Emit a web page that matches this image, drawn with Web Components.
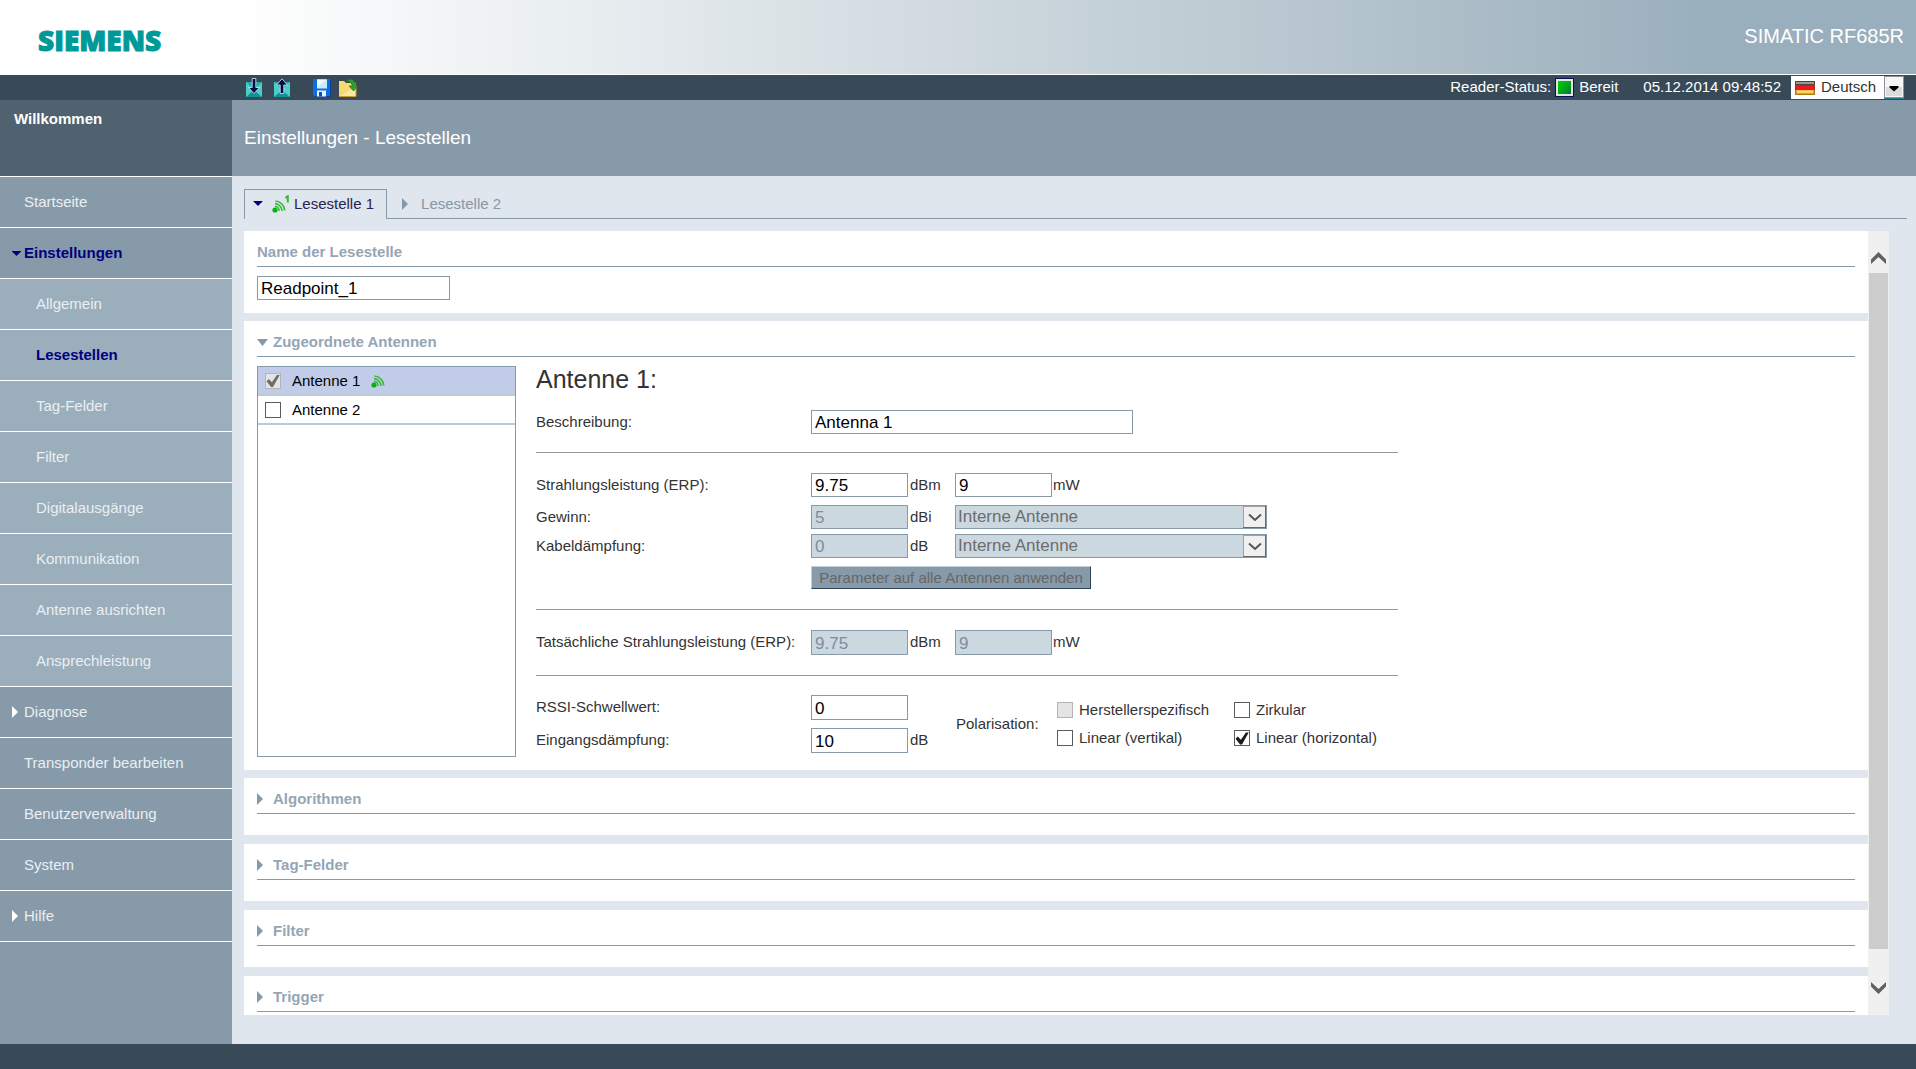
<!DOCTYPE html>
<html lang="de">
<head>
<meta charset="utf-8">
<title>SIMATIC RF685R - Einstellungen - Lesestellen</title>
<style>
  html, body { height: 100%; }
  body { margin: 0; font: 15px/18px "Liberation Sans", Arial, sans-serif; color: #333; }
</style>
</head>
<body>
<reader-app></reader-app>

<script>
const define = (name, html, setup) => {
  const template = document.createElement('template');
  template.innerHTML = '<style>*, *::before { box-sizing: border-box; }</style>' + html;
  customElements.define(name, class extends HTMLElement {
    constructor() {
      super();
      this.attachShadow({ mode: 'open' }).append(template.content.cloneNode(true));
    }
    connectedCallback() {
      if (setup && !this.ready) { this.ready = true; setup(this, this.shadowRoot); }
    }
  });
};

/* Radio wave symbol of an active antenna, with an optional read point number */
define('antenna-icon', `
<style>
  :host { display: block; flex: none; }
  svg { display: block; }
  .num { display: none; }
  :host([number]) .num { display: inline; }
</style>
<svg width="18" height="18" viewBox="0 0 18 18" fill="none" stroke="#36bd36">
  <path d="M3 11.300A5 5 0 0 1 7.200 16" stroke-width="1.500"/>
  <path d="M3 8.700A7.600 7.600 0 0 1 10 16" stroke-width="1.700"/>
  <path d="M3.500 6A10 10 0 0 1 12.700 15.500" stroke-width="1.700"/>
  <circle cx="3" cy="15" r="2.600" fill="#0cb00c" stroke="none"/>
  <path class="num" d="M13.400 2.800L15.800 1.200V7.500" stroke="#2fc02f" stroke-width="2"/>
</svg>`);

define('app-header', `
<style>
  :host { display: flex; align-items: center; justify-content: space-between; flex: none; height: 75px;
    padding: 0 12px 0 38px; border-bottom: 1px solid #fff;
    background: linear-gradient(90deg, #fff 0, #fff 12%, #edf1f3 27%, #b1c1cb 73%, #9aafbd 89%, #9aafbd 100%); }
  .logo { font: 800 28px/30px "Open Sans", sans-serif; color: #099; margin-top: 6px; -webkit-text-stroke: 1px #099; }
  .product { font-size: 20px; line-height: 24px; color: #fff; padding-bottom: 2px; }
</style>
<div class="logo">SIEMENS</div>
<div class="product">SIMATIC RF685R</div>`);

define('tool-bar', `
<style>
  :host { display: flex; align-items: center; flex: none; height: 25px; padding: 0 12px 0 245px; background: #384a58; color: #fff; line-height: 25px; }
  .tools { display: flex; align-items: center; gap: 8px; flex: 1; }
  button { border: 0; padding: 0; background: none; display: block; }
  svg { display: block; }
  .save { margin-left: 13px; }
  .text { padding-bottom: 2px; line-height: 23px; }
  .led { width: 19px; height: 19px; margin: 0 5px 0 4px; border: 1px solid #0a1050; background: #dde8e4; padding: 2px; }
  .led i { display: block; height: 100%; background: linear-gradient(135deg, #0c0 10%, #00a020 60%, #086850); }
  .date { margin: 0 10px 0 25px; }
  .lang { display: grid; grid-template-columns: 30px 63px 20px; height: 23px; background: #fff; }
  .lang > * { grid-row: 1; }
  select { grid-column: 1 / 4; appearance: none; border: 0; margin: 0; padding: 0 0 2px 30px; background: transparent; font: inherit; line-height: 21px; color: #333; height: 23px; }
  .flag { grid-column: 1; align-self: center; margin-left: 4px; pointer-events: none; }
  .drop { grid-column: 3; pointer-events: none; }
</style>
<div class="tools">
  <button aria-label="Laden in Reader"><svg width="18" height="20" viewBox="0 0 18 20">
    <rect x="1" y="4" width="16" height="15" fill="#28aaa8"/><path d="M1 4l8 8 8-8v15H1z" fill="#49cfc8"/><path d="M1 19l8-7 8 7z" fill="#168e96"/>
    <path d="M7.200.500h3.600V9.500h3.700L9 15.500 3.500 9.500h3.700z" fill="#060a48" stroke="#d4f3f2" stroke-width=".8"/></svg></button>
  <button style="margin-left:2px" aria-label="Laden aus Reader"><svg width="18" height="20" viewBox="0 0 18 20">
    <rect x="1" y="4" width="16" height="15" fill="#28aaa8"/><path d="M1 4l8 8 8-8v15H1z" fill="#49cfc8"/><path d="M1 19l8-7 8 7z" fill="#168e96"/>
    <path d="M7.200 15.500h3.600V7h3.700L9 .8 3.500 7h3.700z" fill="#060a48" stroke="#d4f3f2" stroke-width=".8"/></svg></button>
  <button class="save" aria-label="Speichern"><svg width="20" height="20" viewBox="0 0 20 20">
    <path d="M2 1h16a1 1 0 0 1 1 1v17H3l-2-2V2a1 1 0 0 1 1-1z" fill="#0b6fe0"/><path d="M18 1v18h1V2zM3 19h16v-1H3z" fill="#0a3f9c"/>
    <rect x="5" y="1.500" width="10" height="9" fill="#cdeafa"/><path d="M5 1.500h10L5 9z" fill="#eef9ff"/>
    <rect x="5" y="12.500" width="9" height="6" fill="#e8f2fc"/><rect x="7" y="14" width="3" height="4.500" fill="#0a50b4"/></svg></button>
  <button style="margin-left:-2px" aria-label="Öffnen"><svg width="20" height="20" viewBox="0 0 20 20">
    <path d="M1 3h5l2 2h10v14H1z" fill="#f8d775"/><path d="M1 19L18 8v11z" fill="#fbe6a2"/><path d="M1 18.500h17V7" fill="none" stroke="#c99a35"/>
    <path d="M8 2.500C13-.5 17.500 2 17.500 7.500H20L15.500 13 11 8h3C14 5 12 3 8 2.500z" fill="#2f9e2f" stroke="#187018" stroke-width=".6"/></svg></button>
</div>
<span class="text">Reader-Status:</span><span class="led"><i></i></span><span class="text">Bereit</span>
<span class="text date">05.12.2014 09:48:52</span>
<div class="lang">
  <select aria-label="Sprache"><option>Deutsch</option><option>English</option></select>
  <svg class="flag" width="20" height="14" viewBox="0 0 20 14"><path d="M0 0h20v5H0z" fill="#4a4a3e"/><path d="M1 1h18v2H1z" fill="#9a9a8c"/><path d="M0 4.500h20v5H0z" fill="#f01820"/><path d="M0 9.500h20V14H0z" fill="#d8a224"/><path d="M2 9.500h16v2.500H2z" fill="#fbd94c"/><path d="M.5.500h19v13H.5z" fill="none" stroke="#7a3a18" stroke-opacity=".4"/></svg>
  <svg class="drop" width="20" height="23" viewBox="0 0 20 23"><path d="M0 0h20v23H0z" fill="#8d9499"/><path d="M1 1h18v20H1z" fill="#f6f6f6"/><path d="M2 11h16v9H2z" fill="#dcdcdc"/><path d="M0 22h20v1H0z" fill="#2e7288"/><path d="M5.500 10h9v1.500L10 15.500 5.500 11.500z" fill="#000"/></svg>
</div>`);

/* Sidebar entry; attributes: sub, active, arrow="right|down" */
define('nav-item', `
<style>
  :host { display: block; flex: none; border-bottom: 1px solid #fff; background: #879aa9; }
  :host([sub]) { background: #9baebc; }
  a { display: flex; align-items: center; height: 50px; padding-left: 12px; color: #e9eff3; text-decoration: none; }
  :host([sub]) a { padding-left: 24px; }
  :host([active]) a { color: #000080; font-weight: bold; }
  .mark { width: 12px; flex: none; display: flex; }
  svg { display: none; fill: currentColor; }
  :host([arrow=right]) .right, :host([arrow=down]) .down { display: block; }
  .right { color: #fff; }
</style>
<a href="#"><span class="mark">
  <svg class="right" width="6" height="12"><path d="M0 0l6 6-6 6z"/></svg>
  <svg class="down" width="9" height="5"><path d="M0 0h9v.5L4.500 5 0 .5z"/></svg>
</span><slot></slot></a>`);

define('side-nav', `
<style>
  :host { display: flex; flex-direction: column; flex: none; width: 232px; background: #879aa9; overflow: hidden; }
  .welcome { flex: none; height: 77px; padding: 10px 14px; background: #506270; border-bottom: 1px solid #fff; color: #fff; font-weight: bold; }
  nav { display: flex; flex-direction: column; }
</style>
<div class="welcome">Willkommen</div>
<nav><slot></slot></nav>`);

define('tab-bar', `
<style>
  :host { display: flex; flex: none; margin-right: 9px; height: 30px; line-height: 28px; }
  a { display: flex; align-items: center; text-decoration: none; color: #8797a5; }
  .on { border: 1px solid #879aa9; border-bottom: 0; padding: 0 12px 2px 8px; color: #2a2350; }
  .off { flex: 1; border-bottom: 1px solid #879aa9; padding: 1px 0 0 15px; gap: 13px; }
  antenna-icon { margin: 0 4px 0 9px; }
</style>
<a class="on" href="#"><svg width="10" height="5" fill="#000080"><path d="M0 0h10L5 5z"/></svg><antenna-icon number></antenna-icon>Lesestelle 1</a>
<a class="off" href="#"><svg width="6" height="12" fill="#8699a8"><path d="M0 0l6 6-6 6z"/></svg>Lesestelle 2</a>`);

/* White section with an underlined caption; attributes: caption, state="open|closed" */
define('content-panel', `
<style>
  :host { display: block; flex: none; background: #fff; padding: 0 13px 13px; margin-bottom: 8px; }
  :host([state=closed]) { height: 57px; margin-bottom: 9px; }
  h2 { display: flex; align-items: center; height: 36px; margin: 0; padding-top: 7px; border-bottom: 1px solid #879aa9;
    font-size: 15px; line-height: 28px; color: #94a6b4; }
  svg { display: none; fill: #8699a8; flex: none; }
  :host([state=open]) .down, :host([state=closed]) .right { display: block; }
  .down { margin-right: 5px; } .right { margin-right: 10px; }
  slot { display: block; }
  .body { padding-top: 9px; }
</style>
<h2><svg class="down" width="11" height="7"><path d="M0 0h11L5.500 7z"/></svg><svg class="right" width="6" height="12"><path d="M0 0l6 6-6 6z"/></svg><span></span></h2>
<div class="body"><slot></slot></div>`,
(el, root) => { root.querySelector('span').textContent = el.getAttribute('caption'); });

define('text-field', `
<style>
  :host { display: flex; height: 24px; }
  input { flex: 1; width: 100%; min-width: 0; height: 100%; margin: 0; padding: 2px 0 0 3px; border: 1px solid #879aa9; border-radius: 0; background: #fff; color: #000; font: 17px "Liberation Sans", Arial, sans-serif; outline: 0; }
  input:disabled { background: #ccd8e0; color: #7d8d9b; }
  label { flex: none; line-height: 24px; }
  label:not(:empty) { width: 275px; }
</style>
<label for="f"></label><input id="f" type="text">`,
(el, root) => {
  const input = root.querySelector('input');
  input.value = el.getAttribute('value');
  input.disabled = el.hasAttribute('disabled');
  if (el.hasAttribute('label')) root.querySelector('label').textContent = el.getAttribute('label');
  else input.setAttribute('aria-label', el.getAttribute('name'));
});

define('select-field', `
<style>
  :host { display: grid; grid-template-columns: 1fr 24px; height: 24px; width: 312px; }
  select { grid-area: 1 / 1 / 2 / 3; appearance: none; margin: 0; padding: 0 0 2px 2px; border: 1px solid #879aa9; border-radius: 0; background: #ccd8e0; color: #6d6d6d; opacity: 1; font: 17px "Liberation Sans", Arial, sans-serif; }
  svg { grid-area: 1 / 2; pointer-events: none; }
</style>
<select disabled><option>Interne Antenne</option></select>
<svg width="24" height="24" viewBox="0 0 24 24"><path d="M0 1h23v22H0z" fill="#696969"/><path d="M0 1h22v21H0z" fill="#a0a0a0"/><path d="M1 2h21v20H1z" fill="#f0f0f0"/><path d="M6 9.500l6 5.500 6-5.500" fill="none" stroke="#555" stroke-width="2"/></svg>`,
(el, root) => root.querySelector('select').setAttribute('aria-label', el.getAttribute('name')));

define('check-box', `
<style>
  :host { display: flex; align-items: center; }
  label { display: flex; align-items: center; gap: var(--check-gap, 6px); height: 16px; }
  input { appearance: none; flex: none; width: 16px; height: 16px; margin: 0; border: 1px solid #5c5c5c; background: #fff; }
  input:disabled { border-color: #b4b4b4; background: #e4e4e4; }
  input:checked::before { content: ""; display: block; width: 14px; height: 14px; background: #1c1c1c;
    clip-path: polygon(4% 55%, 20% 40%, 42% 62%, 78% 10%, 98% 10%, 50% 96%, 36% 96%); }
  input:checked:disabled::before { background: #6d6d6d; }
</style>
<label><input type="checkbox"><span><slot></slot></span></label>`,
(el, root) => {
  const input = root.querySelector('input');
  input.checked = el.hasAttribute('checked');
  input.disabled = el.hasAttribute('disabled');
});

define('antenna-list', `
<style>
  :host { display: block; flex: none; width: 259px; border: 1px solid #879aa9; color: #000; }
  div { display: flex; align-items: center; gap: 11px; height: 29px; padding: 0 7px; border-bottom: 2px solid #bccbd8; --check-gap: 11px; }
  .sel { background: #c0cce8; }
  antenna-icon { padding-bottom: 4px; }
</style>
<div class="sel"><check-box checked disabled>Antenne 1</check-box><antenna-icon></antenna-icon></div>
<div><check-box>Antenne 2</check-box></div>`);

define('antenna-form', `
<style>
  :host { display: block; flex: 0 1 862px; min-width: 0; }
  h3 { margin: 0; font-size: 25px; line-height: 27px; padding-bottom: 2px; font-weight: normal; }
  section { display: flex; flex-direction: column; padding: 20px 0; border-bottom: 1px solid #999; }
  section:first-of-type { padding: 15px 0 18px; }
  section:last-of-type { flex-direction: row; border: 0; padding: 19px 0 0; }
  .row { display: grid; grid-template-columns: 372px 47px 1fr; line-height: 24px; }
  .row > span { padding-left: 2px; }
  .pair { display: flex; }
  .pair text-field { width: 97px; }
  .pair span { padding-left: 1px; }
  .description { width: 597px; }
  .gain { margin: 8px 0 5px; }
  .tall text-field { height: 25px; }
  button { align-self: flex-start; margin: 8px 0 0 275px; height: 23px; width: 280px; padding: 0; border: 1px solid; border-color: #c3ced7 #2d4252 #2d4252 #c3ced7; border-radius: 0; background: #879aa9; color: #666; font: 15px "Liberation Sans", Arial, sans-serif; }
  .levels { display: flex; flex-direction: column; gap: 8px; width: 420px; flex: none; }
  .levels .row { grid-template-columns: 372px 48px; }
  fieldset { display: flex; align-items: center; border: 0; margin: 0; padding: 0; }
  .name { width: 101px; }
  .options { display: grid; grid-template-columns: 177px auto; gap: 12px 0; }
</style>
<h3>Antenne 1:</h3>
<section><text-field class="description" label="Beschreibung:" value="Antenna 1"></text-field></section>
<section>
  <div class="row"><text-field label="Strahlungsleistung (ERP):" value="9.75"></text-field><span>dBm</span>
    <div class="pair"><text-field name="Strahlungsleistung in mW" value="9"></text-field><span>mW</span></div></div>
  <div class="row gain"><text-field label="Gewinn:" value="5" disabled></text-field><span>dBi</span><select-field name="Gewinn, Antennentyp"></select-field></div>
  <div class="row"><text-field label="Kabeldämpfung:" value="0" disabled></text-field><span>dB</span><select-field name="Kabel, Antennentyp"></select-field></div>
  <button type="button" disabled>Parameter auf alle Antennen anwenden</button>
</section>
<section>
  <div class="row tall"><text-field label="Tatsächliche Strahlungsleistung (ERP):" value="9.75" disabled></text-field><span>dBm</span>
    <div class="pair"><text-field name="Tatsächliche Strahlungsleistung in mW" value="9" disabled></text-field><span>mW</span></div></div>
</section>
<section>
  <div class="levels">
    <div class="row tall"><text-field label="RSSI-Schwellwert:" value="0"></text-field></div>
    <div class="row tall"><text-field label="Eingangsdämpfung:" value="10"></text-field><span>dB</span></div>
  </div>
  <fieldset aria-label="Polarisation">
    <span class="name">Polarisation:</span>
    <div class="options">
      <check-box disabled>Herstellerspezifisch</check-box><check-box>Zirkular</check-box>
      <check-box>Linear (vertikal)</check-box><check-box checked>Linear (horizontal)</check-box>
    </div>
  </fieldset>
</section>`);

/* Clipped viewport with its scroll bar */
define('scroll-pane', `
<style>
  :host { display: flex; flex: 1; min-height: 0; }
  .view { flex: 1; min-width: 0; overflow: hidden; }
  .bar { display: flex; flex-direction: column; align-items: center; flex: none; width: 21px; padding: 21px 0; background: #f0f0f0; }
  .thumb { flex: 1; width: 19px; margin: 9px 0 33px; background: #cdcdcd; }
  svg { flex: none; fill: #606060; }
</style>
<div class="view"><slot></slot></div>
<div class="bar">
  <svg width="15" height="12"><path d="M7.500 0L15 7.500V12L7.500 5 0 12V7.500z"/></svg>
  <div class="thumb"></div>
  <svg width="15" height="12"><path d="M7.500 12L15 4.500V0L7.500 7 0 0v4.500z"/></svg>
</div>`);

define('reader-app', `
<style>
  :host { display: flex; flex-direction: column; height: 100vh; overflow: hidden; background: #dfe6ed; }
  .main { display: flex; flex: 1; min-height: 0; }
  .content { display: flex; flex-direction: column; flex: 1; min-width: 0; }
  h1 { display: flex; align-items: center; flex: none; height: 76px; margin: 0; padding-left: 12px; background: #879aa9; color: #fff; font-size: 19px; font-weight: normal; }
  .work { display: flex; flex-direction: column; flex: 1; min-height: 0; padding: 13px 0 29px 12px; }
  scroll-pane { margin: 12px 27px 0 0; }
  .antennas { display: flex; gap: 20px; height: 391px; }
  .name { width: 193px; }
  footer { flex: none; height: 25px; background: #384a58; }
</style>
<app-header></app-header>
<tool-bar></tool-bar>
<div class="main">
  <side-nav>
    <nav-item>Startseite</nav-item>
    <nav-item active arrow="down">Einstellungen</nav-item>
    <nav-item sub>Allgemein</nav-item>
    <nav-item sub active>Lesestellen</nav-item>
    <nav-item sub>Tag-Felder</nav-item>
    <nav-item sub>Filter</nav-item>
    <nav-item sub>Digitalausgänge</nav-item>
    <nav-item sub>Kommunikation</nav-item>
    <nav-item sub>Antenne ausrichten</nav-item>
    <nav-item sub>Ansprechleistung</nav-item>
    <nav-item arrow="right">Diagnose</nav-item>
    <nav-item>Transponder bearbeiten</nav-item>
    <nav-item>Benutzerverwaltung</nav-item>
    <nav-item>System</nav-item>
    <nav-item arrow="right">Hilfe</nav-item>
  </side-nav>
  <div class="content">
    <h1>Einstellungen - Lesestellen</h1>
    <div class="work">
      <tab-bar></tab-bar>
      <scroll-pane>
        <content-panel caption="Name der Lesestelle"><text-field class="name" name="Name der Lesestelle" value="Readpoint_1"></text-field></content-panel>
        <content-panel caption="Zugeordnete Antennen" state="open">
          <div class="antennas"><antenna-list></antenna-list><antenna-form></antenna-form></div>
        </content-panel>
        <content-panel caption="Algorithmen" state="closed"></content-panel>
        <content-panel caption="Tag-Felder" state="closed"></content-panel>
        <content-panel caption="Filter" state="closed"></content-panel>
        <content-panel caption="Trigger" state="closed"></content-panel>
      </scroll-pane>
    </div>
  </div>
</div>
<footer></footer>`);
</script>
</body>
</html>
